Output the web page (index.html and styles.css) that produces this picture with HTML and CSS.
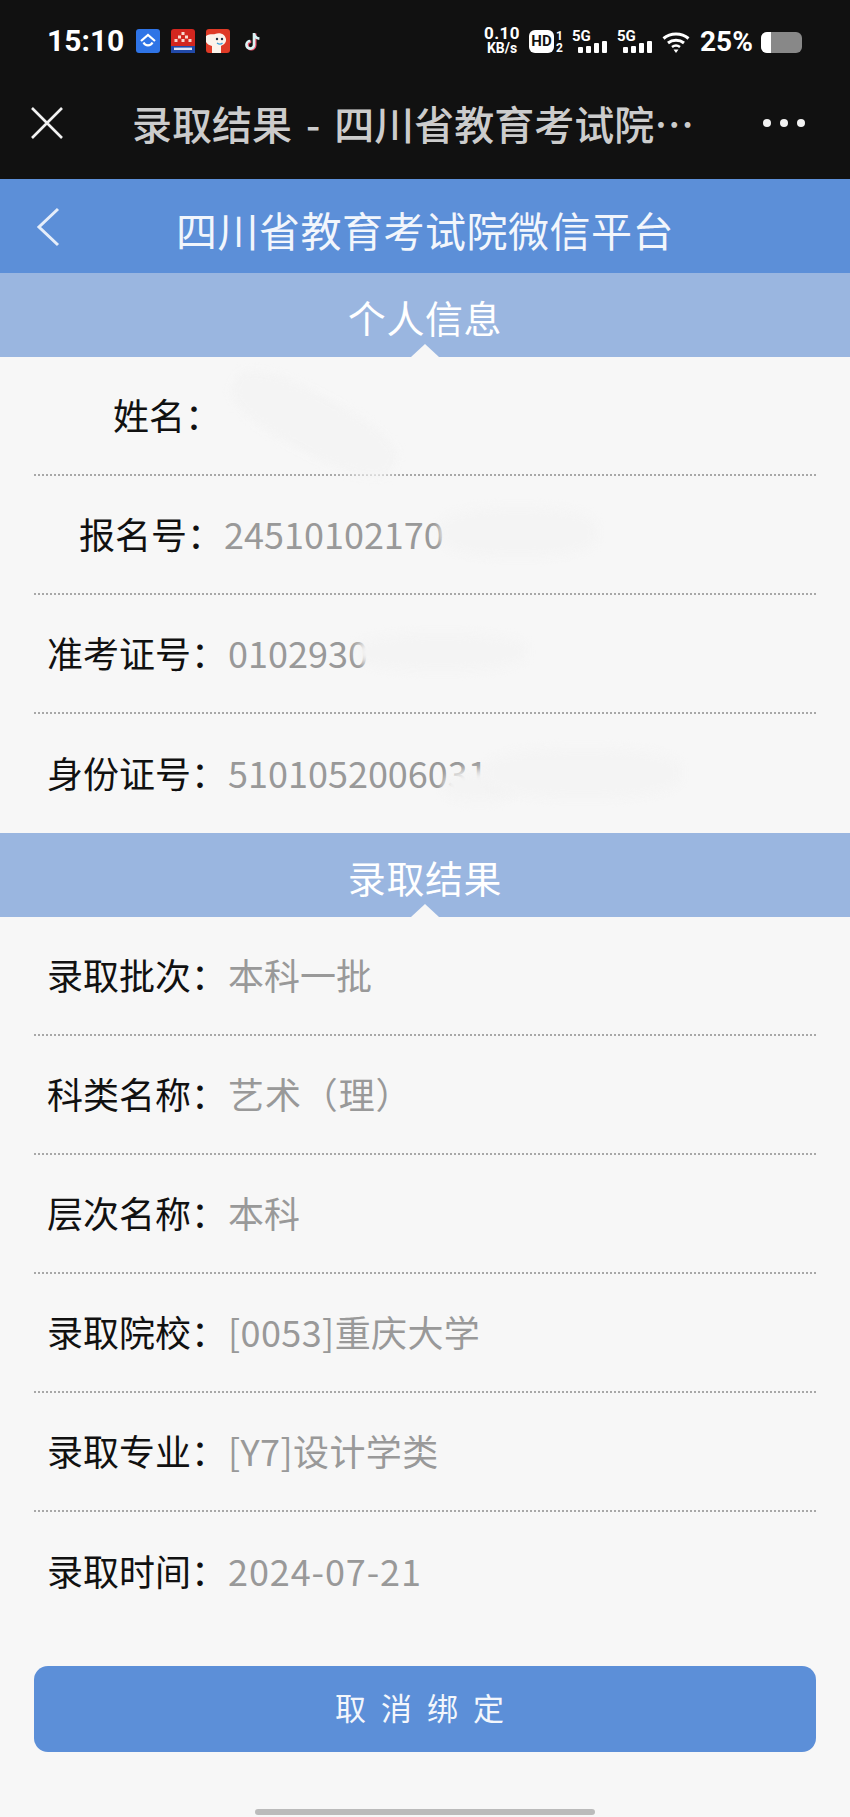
FILE: index.html
```html
<!DOCTYPE html>
<html lang="zh-CN">
<head>
    <meta charset="UTF-8">
    <meta name="viewport" content="width=device-width, initial-scale=1.0">
    <title>录取结果 - 四川省教育考试院微信平台</title>
    <link rel="stylesheet" href="styles.css">
</head>
<body>
    <div class="topbar">
        <!-- 状态栏 -->
        <div class="status">
            <div class="status-left">
                <span class="clock">15:10</span>
                <svg class="app" viewBox="0 0 24 24">
                    <rect width="24" height="24" rx="3" fill="#2f74e6"/>
                    <path d="M5 12 12 6l7 6" fill="none" stroke="#fff" stroke-width="2.2"/>
                    <path d="M7.500 13.500a5 5 0 0 0 9 0" fill="none" stroke="#fff" stroke-width="2.2"/>
                </svg>
                <svg class="app" viewBox="0 0 24 24">
                    <rect width="24" height="24" rx="3" fill="#d3261f"/>
                    <rect y="17" width="24" height="7" fill="#2149a8"/>
                    <rect x="3" y="18.600" width="18" height="2.400" fill="#dfe6f5"/>
                    <path d="M10.500 3h3v3h-3zM7 6.500h3v3H7zM14 6.500h3v3h-3zM10.500 10h3v3h-3zM3.500 10h3v3h-3zM17.500 10h3v3h-3z" fill="#f6d9d0"/>
                </svg>
                <svg class="app" viewBox="0 0 24 24">
                    <rect width="24" height="24" rx="3" fill="#df3a26"/>
                    <path d="M0 7c5-3 7-1 9-2 5-2 10 0 11 5 .6 4-3 6-5 7v7H6v-7C3 16 1 15 0 13z" fill="#fbf3ea"/>
                    <circle cx="11" cy="10" r="1.200" fill="#234"/>
                    <circle cx="16" cy="10" r="1.200" fill="#234"/>
                    <path d="M11 14c2 1.500 4 1.500 5.500 0" fill="none" stroke="#3aa0d8" stroke-width="1.300"/>
                </svg>
                <svg class="app-note" viewBox="0 0 18 24">
                    <path d="M10 5v11a3.500 3.500 0 1 1-3.500-3.500" fill="none" stroke="#f2556f" stroke-width="2.600"/>
                    <path d="M9 4.500v11a3.500 3.500 0 1 1-3.500-3.500M9 5c.5 3 2.500 4.500 5 4.800" fill="none" stroke="#d9f3f5" stroke-width="2.400"/>
                </svg>
            </div>
            <div class="status-right">
                <div class="speed">
                    <span class="speed-num">0.10</span>
                    <span class="speed-unit">KB/s</span>
                </div>
                <div class="hd">
                    <span class="hd-box">HD</span>
                    <span class="hd-sim"><span>1</span><span>2</span></span>
                </div>
                <div class="signal">
                    <span class="signal-name">5G</span>
                    <div class="bars"><i class="b1"></i><i class="b2"></i><i class="b3"></i><i class="b4"></i></div>
                </div>
                <div class="signal">
                    <span class="signal-name">5G</span>
                    <div class="bars"><i class="b1"></i><i class="b2"></i><i class="b3"></i><i class="b4"></i></div>
                </div>
                <svg class="wifi" viewBox="0 0 28 22">
                    <path d="M1.500 7.500c7-6 18-6 25 0" fill="none" stroke="#fff" stroke-width="3"/>
                    <path d="M6 12c4.500-3.600 11.500-3.600 16 0" fill="none" stroke="#fff" stroke-width="3"/>
                    <path d="M10 16c2.300-1.700 5.700-1.700 8 0" fill="none" stroke="#fff" stroke-width="2.600"/>
                    <path d="M11.500 18.500h5L14 22z" fill="#fff"/>
                </svg>
                <span class="percent">25%</span>
                <div class="battery"><div class="battery-fill"></div></div>
            </div>
        </div>
        <!-- 微信标题栏 -->
        <div class="navbar">
            <svg class="nav-close" viewBox="0 0 32 32">
                <path d="M1 1l30 30M31 1 1 31" fill="none" stroke="#f2f2f2" stroke-width="2.600"/>
            </svg>
            <span class="nav-title">录取结果 - 四川省教育考试院…</span>
            <div class="nav-more"><i></i><i></i><i></i></div>
        </div>
    </div>

    <header class="header">
        <svg class="back" viewBox="0 0 24 40">
            <path d="M22 2 3 20l19 18" fill="none" stroke="#e6eefa" stroke-width="3"/>
        </svg>
        <h1>四川省教育考试院微信平台</h1>
    </header>

    <div class="section-title">个人信息</div>
    <div class="row row-two">
        <span class="label">姓名：</span>
        <i class="blob blob-name"></i>
    </div>
    <div class="row row-three">
        <span class="label">报名号：</span>
        <span class="value">24510102170</span>
        <i class="blob blob-signup"></i>
    </div>
    <div class="row">
        <span class="label">准考证号：</span>
        <span class="value">0102930</span>
        <i class="blob blob-exam"></i>
    </div>
    <div class="row row-last">
        <span class="label">身份证号：</span>
        <span class="value">5101052006031</span>
        <i class="blob blob-id-low"></i>
        <i class="blob blob-id-high"></i>
    </div>

    <div class="section-title">录取结果</div>
    <div class="row"><span class="label">录取批次：</span><span class="value">本科一批</span></div>
    <div class="row"><span class="label">科类名称：</span><span class="value value-loose">艺术（理）</span></div>
    <div class="row"><span class="label">层次名称：</span><span class="value">本科</span></div>
    <div class="row"><span class="label">录取院校：</span><span class="value value-wide">[0053]重庆大学</span></div>
    <div class="row"><span class="label">录取专业：</span><span class="value value-wide">[Y7]设计学类</span></div>
    <div class="row row-last"><span class="label">录取时间：</span><span class="value value-loose">2024-07-21</span></div>

    <button class="unbind">取消绑定</button>
    <div class="home-bar"></div>
</body>
</html>
```

FILE: styles.css
```css
* {
    box-sizing: border-box;
}
body {
    margin: 0;
    background: #f7f7f7;
    font-family: "Noto Sans CJK SC", "Noto Sans", sans-serif;
}
.topbar {
    height: 179px;
    background: #111;
    color: #fff;
}
.status {
    display: flex;
    justify-content: space-between;
    height: 82px;
    padding: 26px 48px 0 47px;
}
.status-left,
.status-right {
    display: flex;
    align-items: flex-start;
}
.clock {
    width: 89px;
    font: 700 30px/30px Roboto, sans-serif;
}
.app {
    width: 24px;
    height: 24px;
    margin: 3px 11px 0 0;
}
.app-note {
    width: 20px;
    height: 26px;
    margin: 2px 0 0 3px;
}
.speed {
    display: flex;
    flex-direction: column;
    align-items: center;
    width: 38px;
    margin-right: 8px;
    font-family: Roboto, sans-serif;
    font-weight: 700;
}
.speed-num {
    font-size: 17px;
    line-height: 15px;
    letter-spacing: .5px;
}
.speed-unit {
    font-size: 14px;
    line-height: 14px;
}
.hd {
    display: flex;
    margin: 4px 8px 0 0;
}
.hd-box {
    width: 25px;
    height: 23px;
    border-radius: 6px;
    background: #fff;
    color: #111;
    font: 700 15px/23px Roboto, sans-serif;
    text-align: center;
}
.hd-sim {
    display: flex;
    flex-direction: column;
    width: 10px;
    padding-left: 2px;
    font: 700 12px/12px Roboto, sans-serif;
}
.signal {
    width: 36px;
    margin: 4px 9px 0 0;
}
.signal-name {
    display: block;
    height: 12px;
    font: 700 15px/12px Roboto, sans-serif;
}
.bars {
    display: flex;
    align-items: flex-end;
    justify-content: flex-end;
    gap: 3px;
    height: 12px;
    margin-top: -1px;
    padding-right: 1px;
}
.bars i {
    width: 5px;
    background: #fff;
    border-radius: 1px;
}
.bars .b1 {
    height: 6px;
}
.bars .b2 {
    height: 7px;
}
.bars .b3 {
    height: 10px;
}
.bars .b4 {
    height: 12px;
}
.wifi {
    width: 28px;
    height: 22px;
    margin: 5px 10px 0 0;
}
.percent {
    width: 61px;
    font: 700 28px/32px Roboto, sans-serif;
}
.battery {
    width: 41px;
    height: 21px;
    margin-top: 6px;
    border-radius: 6px;
    background: #888;
    overflow: hidden;
}
.battery-fill {
    width: 10px;
    height: 100%;
    background: #fff;
}
.navbar {
    display: flex;
    align-items: center;
    height: 97px;
    padding: 0 45px 16px 31px;
}
.nav-close {
    width: 32px;
    height: 32px;
    margin-right: 69px;
}
.nav-title {
    flex: 1;
    color: #ccc;
    font-size: 40px;
    font-weight: 500;
    line-height: 56px;
    white-space: nowrap;
    word-spacing: 5px;
}
.nav-more {
    display: flex;
    gap: 9px;
}
.nav-more i {
    width: 8px;
    height: 8px;
    border-radius: 50%;
    background: #f2f2f2;
}
.header {
    display: grid;
    grid-template-columns: 84px 1fr 84px;
    align-items: center;
    height: 94px;
    background: #5c8fd8;
}
.back {
    width: 24px;
    height: 40px;
    margin: 2px 0 0 36px;
}
.header h1 {
    margin: 6px 0 0;
    color: #f2f6fc;
    font-size: 41px;
    font-weight: 400;
    line-height: 60px;
    letter-spacing: .5px;
    text-align: center;
}
.section-title {
    position: relative;
    height: 84px;
    padding-top: 18px;
    background: #9ab6e0;
    color: #fff;
    font-size: 38px;
    line-height: 52px;
    letter-spacing: .6px;
    text-align: center;
}
/* 标题下方的小三角 */
.section-title::after {
    content: '';
    position: absolute;
    left: 411px;
    bottom: 0;
    border-left: 14px solid transparent;
    border-right: 14px solid transparent;
    border-bottom: 13px solid #f7f7f7;
}
.row {
    position: relative;
    display: flex;
    align-items: center;
    height: 119px;
    margin: 0 34px;
    padding: 0 0 4px 13px;
    border-bottom: 2px dotted #a8a8a8;
    font-size: 36px;
}
.row-two {
    padding-left: 79px;
}
.row-three {
    padding-left: 45px;
}
.row-last {
    border-bottom: none;
}
.label {
    color: #111;
}
.value {
    margin-left: 1px;
    color: #999;
}
.value-wide {
    letter-spacing: .4px;
}
.value-loose {
    letter-spacing: .9px;
}
/* 截图上的涂抹 */
.blob {
    position: absolute;
    background: #f4f4f4;
    border-radius: 40%;
    filter: blur(4px);
}
.blob-name {
    left: 190px;
    top: 38px;
    width: 180px;
    height: 58px;
    transform: rotate(28deg);
}
.blob-signup {
    left: 406px;
    top: 31px;
    width: 156px;
    height: 50px;
}
.blob-exam {
    left: 322px;
    top: 38px;
    width: 170px;
    height: 38px;
}
.blob-id-low {
    left: 410px;
    top: 56px;
    width: 70px;
    height: 32px;
}
.blob-id-high {
    left: 452px;
    top: 34px;
    width: 195px;
    height: 50px;
}
.unbind {
    display: block;
    width: 782px;
    height: 86px;
    margin: 35px auto 0;
    padding: 0 0 6px 4px;
    border: none;
    border-radius: 14px;
    background: #5c8fd8;
    color: #f4f7fc;
    font-family: inherit;
    font-size: 31px;
    letter-spacing: 15px;
}
.home-bar {
    width: 340px;
    height: 6px;
    margin: 57px auto 0;
    border-radius: 3px;
    background: #bbb;
}
```
